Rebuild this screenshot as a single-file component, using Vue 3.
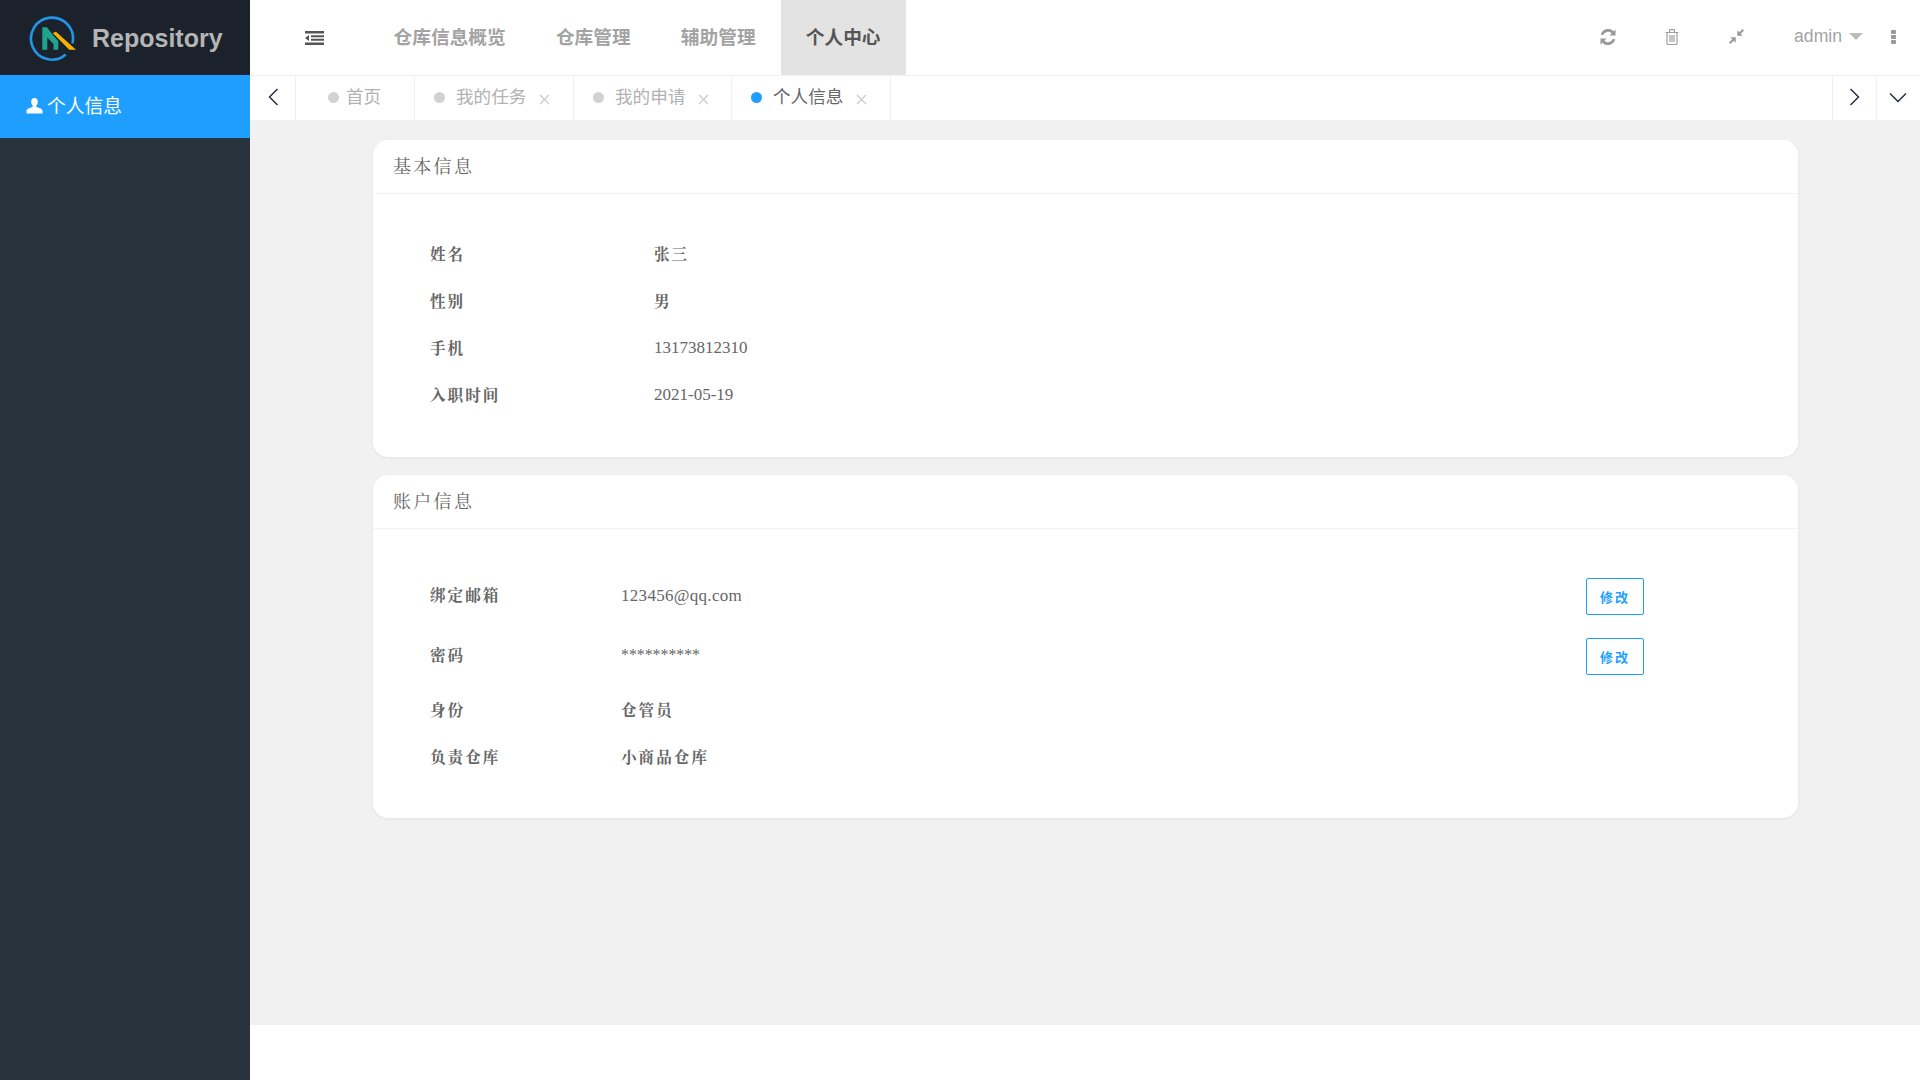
<script setup>
const navItems = [
  { label: '仓库信息概览' },
  { label: '仓库管理' },
  { label: '辅助管理' },
  { label: '个人中心', active: true }
]
const tabs = [
  { label: '首页', w: 119 },
  { label: '我的任务', close: true, w: 159 },
  { label: '我的申请', close: true, w: 158 },
  { label: '个人信息', close: true, active: true, w: 159 }
]
const basic = [
  { k: '姓名', v: '张三', cls: 'cjk' },
  { k: '性别', v: '男', cls: 'cjk' },
  { k: '手机', v: '13173812310', cls: 'num' },
  { k: '入职时间', v: '2021-05-19', cls: 'num' }
]
const account = [
  { k: '绑定邮箱', v: '123456@qq.com', edit: true, cls: 'mail' },
  { k: '密码', v: '**********', edit: true, cls: 'pass' },
  { k: '身份', v: '仓管员' },
  { k: '负责仓库', v: '小商品仓库' }
]
</script>

<template>
  <div class="page">
    <aside class="side">
      <div class="brand">
        <svg class="logo" width="60" height="48" viewBox="0 0 60 48">
          <path d="M37.700 40.500A21 21 0 1 1 44.400 29.500" fill="none" stroke="#2196e8" stroke-width="2.600"/>
          <path d="M14.300 13.300H19L25.300 21.500L30.300 27V35.700H25.500V30L19.300 23.500V35.700H14.300Z" fill="#1fa28e"/>
          <path d="M24.700 19L28 17.700L48 35.700H41.300Z" fill="#f5b400"/>
        </svg>
        <span class="brand-name">Repository</span>
      </div>
      <div class="side-item">
        <svg width="17" height="16" viewBox="0 0 17 16"><path d="M8.500 0C6.300 0 5.200 1.700 5.200 3.700c0 1.600.7 3 1.500 3.800v1.200C4.500 9.800.6 10.500.5 12.800V15.500h16v-2.700c-.1-2.300-4-3-6.200-4.100V7.500c.8-.8 1.500-2.200 1.500-3.800C11.800 1.700 10.700 0 8.500 0z" fill="#fff"/></svg>
        <span class="side-label">个人信息</span>
      </div>
    </aside>
    <main class="main">
      <header class="top">
        <div class="burger">
          <svg width="19" height="14" viewBox="0 0 19 14"><path d="M0 0h19v2.500H0zM6 4.200h13v2H6zM6 7.800h13v2H6zM0 11.500h19V14H0zM4 4v6L0 7z" fill="#555"/></svg>
        </div>
        <nav class="nav">
          <a v-for="n in navItems" :key="n.label" class="nav-item" :class="{ on: n.active }"><span>{{ n.label }}</span></a>
        </nav>
        <div class="tools">
          <svg width="16" height="16" viewBox="0 0 17 17"><path d="M14.300 2.300 16.500.5v6.500H10l2.300-2.300A5.200 5.200 0 0 0 3.600 6.500L.8 6a8 8 0 0 1 13.500-3.700zM2.700 14.700.5 16.500V10H7l-2.300 2.300a5.200 5.200 0 0 0 8.700-1.800l2.800.5a8 8 0 0 1-13.500 3.700z" fill="#9a9a9a"/></svg>
          <svg class="t2" width="14" height="16" viewBox="0 0 14 16"><path d="M.5 3.500h13M2 3.500v10.700c0 .8.500 1.300 1.300 1.300h7.400c.8 0 1.300-.5 1.300-1.300V3.500M4.500 3.500V1.300c0-.4.300-.7.700-.7h3.600c.4 0 .7.300.7.700v2.200M5 6v7M7 6v7M9 6v7" fill="none" stroke="#a0a0a0" stroke-width="1.200"/></svg>
          <svg class="t3" width="15" height="15" viewBox="0 0 15 15"><path d="M8.300 6.700V1.300l2 2L13.500 0 15 1.500l-3.300 3.200 2 2zM6.700 8.300v5.400l-2-2L1.500 15 0 13.500l3.300-3.200-2-2z" fill="#999"/></svg>
          <span class="admin">admin</span>
          <span class="caret"></span>
          <span class="dots"><i></i><i></i><i></i></span>
        </div>
      </header>
      <div class="tabbar">
        <div class="arrow">
          <svg width="11" height="18" viewBox="0 0 11 18"><path d="M9.500 1 1.500 9l8 8" fill="none" stroke="#1d2a3a" stroke-width="1.400"/></svg>
        </div>
        <div class="tabs">
          <div v-for="t in tabs" :key="t.label" class="tab" :class="{ on: t.active }" :style="{ width: t.w + 'px' }">
            <i class="dot"></i>
            <span class="tab-label">{{ t.label }}</span>
            <svg v-if="t.close" class="x" width="11" height="11" viewBox="0 0 11 11"><path d="M1 1l9 9M10 1l-9 9" stroke="#c8c8c8" stroke-width="1.100"/></svg>
          </div>
        </div>
        <div class="arrow end">
          <svg width="11" height="18" viewBox="0 0 11 18"><path d="M1.500 1l8 8-8 8" fill="none" stroke="#1d2a3a" stroke-width="1.400"/></svg>
        </div>
        <div class="arrow end last">
          <svg width="18" height="11" viewBox="0 0 18 11"><path d="M1 1.500l8 8 8-8" fill="none" stroke="#1d2a3a" stroke-width="1.400"/></svg>
        </div>
      </div>
      <div class="content">
        <section class="card">
          <h3 class="card-head"><span>基本信息</span></h3>
          <div class="body basic">
            <div v-for="r in basic" :key="r.k" class="row">
              <span class="key">{{ r.k }}</span>
              <span class="val" :class="r.cls">{{ r.v }}</span>
            </div>
          </div>
        </section>
        <section class="card">
          <h3 class="card-head"><span>账户信息</span></h3>
          <div class="body acct">
            <div v-for="r in account" :key="r.k" class="row" :class="{ tall: r.edit }">
              <span class="key">{{ r.k }}</span>
              <span class="val" :class="r.cls">{{ r.v }}</span>
              <button v-if="r.edit" class="edit">修改</button>
            </div>
          </div>
        </section>
      </div>
      <div class="foot"></div>
    </main>
  </div>
</template>

<style>
html, body { margin: 0; padding: 0; background: #fff; }
</style>

<style scoped>
.page { display: flex; width: 1920px; height: 1080px; overflow: hidden; font-family: "Liberation Sans", "Noto Sans CJK SC", sans-serif; }
.side { width: 250px; flex: none; background: #28333e; }
.brand { height: 75px; background: #1b222b; display: flex; align-items: center; padding-left: 28px; box-sizing: border-box; }
.logo { flex: none; }
.brand-name { margin-left: 4px; margin-top: 2px; font-size: 25px; font-weight: 700; color: #b5b5b5; }
.side-item { height: 63px; background: #1e9fff; color: #fff; display: flex; align-items: center; padding-left: 26px; gap: 4px; font-size: 18.800px; box-sizing: border-box; }
.side-label { margin-bottom: 4px; }
.side-item svg { margin-bottom: 2px; }
.main { flex: 1; display: flex; flex-direction: column; min-width: 0; }
.top { height: 75px; display: flex; align-items: stretch; flex: none; }
.burger { width: 118.500px; padding-left: 55px; box-sizing: border-box; display: flex; align-items: center; flex: none; }
.nav { display: flex; }
.nav-item { padding: 0 25.100px; display: flex; align-items: center; font-size: 18.700px; font-weight: 700; color: #a3a3a3; }
.nav-item span { margin-bottom: 4px; }
.nav-item.on { background: #e3e3e3; color: #555; }
.tools { margin-left: auto; display: flex; align-items: center; padding: 0 24px 2px 0; }
.t2 { margin-left: 49px; }
.t3 { margin-left: 50px; }
.admin { margin-left: 50px; font-size: 17.600px; color: #a3a3a3; }
.caret { margin-left: 7px; width: 0; height: 0; border-left: 7.500px solid transparent; border-right: 7.500px solid transparent; border-top: 7px solid #bbb; }
.dots { margin-left: 28px; display: flex; flex-direction: column; gap: 1px; }
.dots i { width: 5px; height: 4px; background: #999; display: block; border-radius: 1px; }
.tabbar { height: 45px; flex: none; display: flex; border-top: 1px solid #f0f0f0; box-sizing: border-box; background: #fff; }
.arrow { width: 46px; flex: none; display: flex; align-items: center; justify-content: center; border-right: 1px solid #f0f0f0; box-sizing: border-box; padding: 0 0 2px 1px; }
.arrow.end { width: 44px; border-left: 1px solid #f0f0f0; border-right: 0; padding-left: 0; }
.arrow.last { padding-right: 2px; }
.tabs { flex: 1; display: flex; }
.tab { display: flex; align-items: center; padding-left: 19px; border-right: 1px solid #f0f0f0; box-sizing: border-box; font-size: 17.600px; color: #b2b2b2; flex: none; }
.tab:first-child { padding-left: 32px; }
.dot { width: 11px; height: 11px; border-radius: 50%; background: #d2d2d2; margin: 0 11px 2px 0; flex: none; }
.tab:first-child .dot { margin-right: 7px; }
.tab-label { margin-bottom: 5px; }
.tab.on { color: #666; }
.tab.on .dot { background: #1e9fff; }
.x { margin-left: 13px; margin-top: 3px; }
.content { flex: 1; background: #f1f1f1; padding: 20px 122px 0 123px; min-height: 0; }
.foot { height: 55px; flex: none; background: #fff; }
.card { background: #fff; border-radius: 15px; box-shadow: 0 1px 3px rgba(0,0,0,.06); margin-bottom: 18px; font-family: "Liberation Serif", "Noto Serif CJK SC", "Noto Sans CJK SC", serif; color: #666; }
.card-head { margin: 0; height: 54px; box-sizing: border-box; display: flex; align-items: center; padding-left: 20px; border-bottom: 1px solid #f3f3f3; font-weight: 400; font-size: 18px; letter-spacing: 2.300px; color: #666; }
.card-head span { margin-bottom: 4px; }
.body { padding-left: 57px; padding-top: 36px; padding-bottom: 39px; }
.row { display: flex; align-items: center; height: 47px; font-size: 15.600px; letter-spacing: 2px; font-weight: 700; }
.row.tall { height: 60px; }
.key { flex: none; }
.basic .key, .tall .key, .cjk { margin-bottom: 2px; }
.basic .key { width: 224px; }
.acct .key { width: 191px; }
.val { font-weight: 700; }
.num, .mail, .pass { font-weight: 400; }
.num { font-size: 17px; letter-spacing: 0; }
.mail { font-size: 17px; letter-spacing: .3px; margin-top: 2px; }
.pass { font-size: 16px; letter-spacing: -.1px; }
.edit { margin-left: auto; margin-right: 154px; margin-top: 3px; width: 58px; height: 37px; padding: 0; border: 1px solid #1e9fff; border-radius: 2px; background: #fff; color: #1e9fff; font: 700 13px "Liberation Serif", "Noto Sans CJK SC", serif; letter-spacing: 2px; }
</style>
